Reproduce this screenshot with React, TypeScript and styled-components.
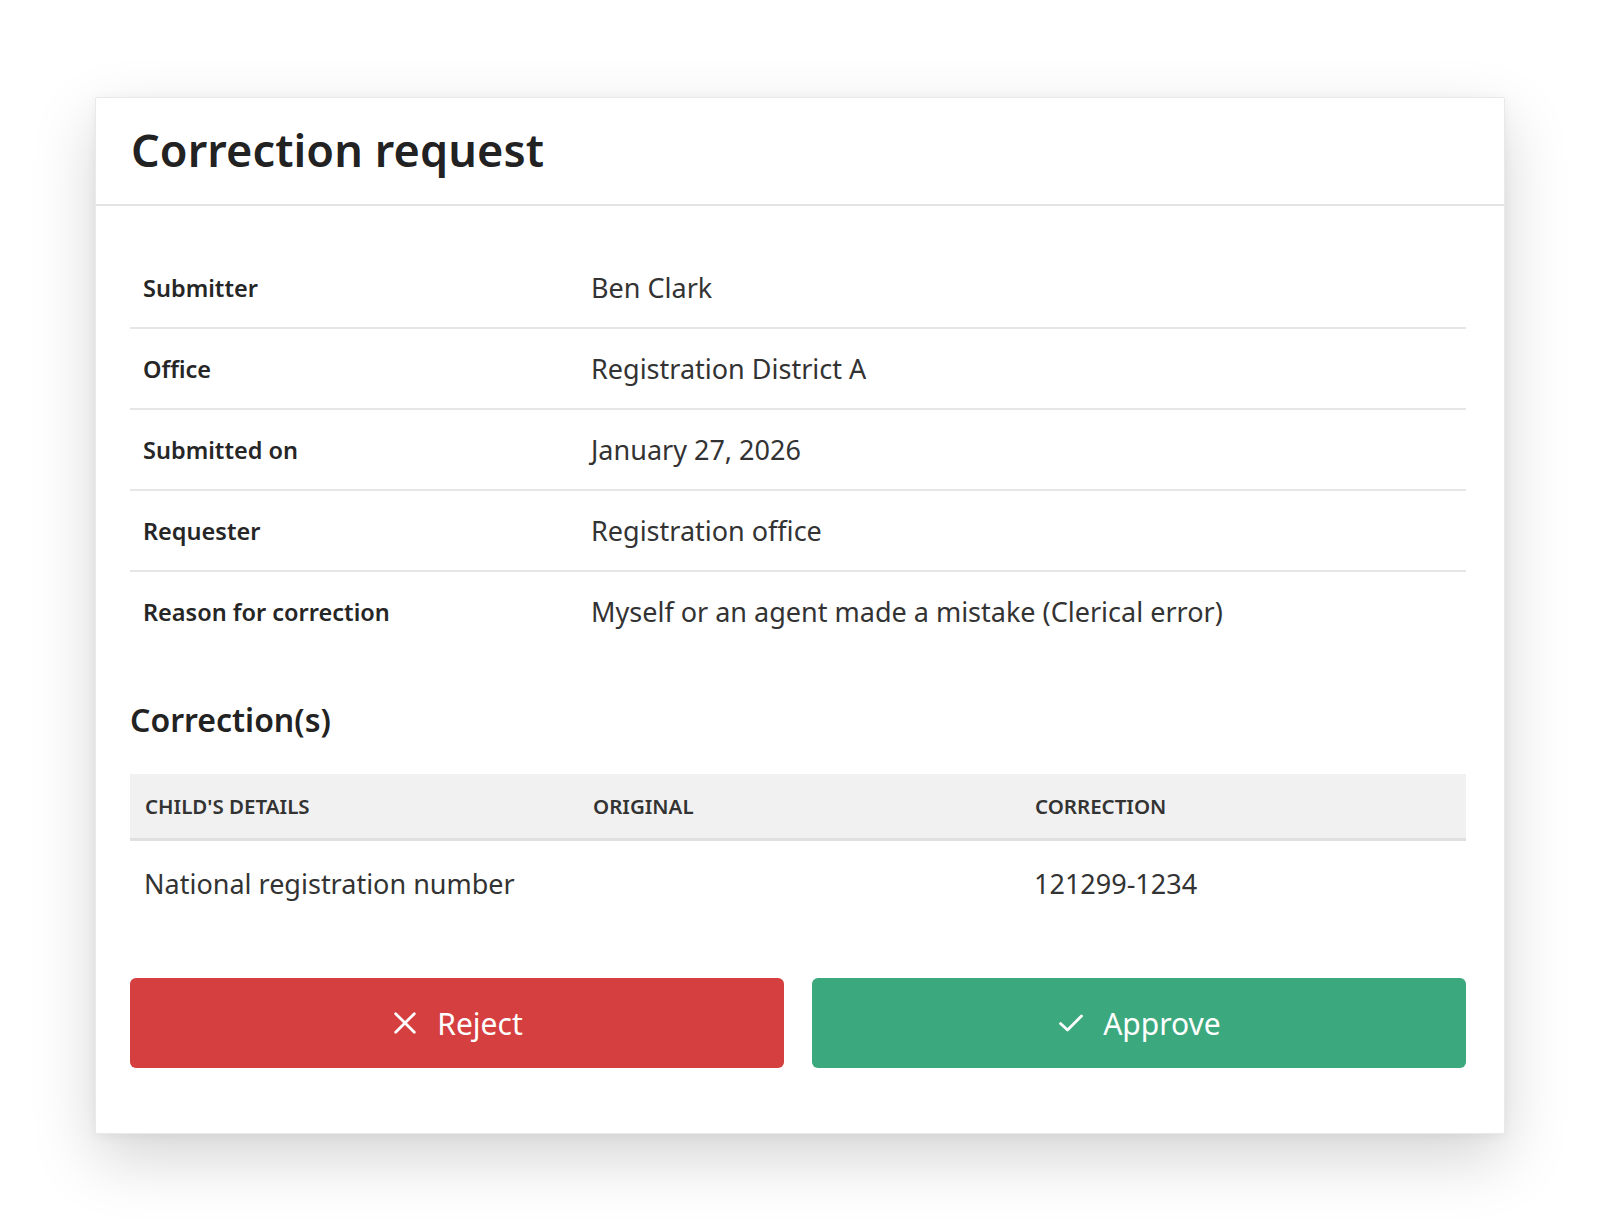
import React from "react";
import styled, { createGlobalStyle } from "styled-components";

const Global = createGlobalStyle`
  html, body {
    margin: 0;
    padding: 0;
    background: #ffffff;
    font-family: "Noto Sans", "Open Sans", sans-serif;
    color: #222222;
  }
  * { box-sizing: border-box; }
`;

const Page = styled.div`
  padding-top: 97px;
  padding-bottom: 99px;
`;

const Card = styled.section`
  width: 1410px;
  margin: 0 auto;
  background: #ffffff;
  border: 1px solid #e9e9e9;
  border-radius: 2px;
  box-shadow: 0 24px 64px rgba(0, 0, 0, 0.17), 0 2px 12px rgba(0, 0, 0, 0.05);
`;

const Header = styled.header`
  height: 108px;
  display: flex;
  align-items: center;
  padding: 0 34px 4px 35px;
  border-bottom: 2px solid #e3e3e3;
`;

const Title = styled.h1`
  margin: 0;
  font-size: 45px;
  font-weight: 600;
  color: #222222;
  letter-spacing: 0.1px;
`;

const Body = styled.div`
  padding: 42px 38px 65px 34px;
  display: flex;
  flex-direction: column;
`;

const InfoList = styled.dl`
  margin: 0;
  display: flex;
  flex-direction: column;
`;

const InfoRow = styled.div<{ $last?: boolean }>`
  display: grid;
  grid-template-columns: 461px 1fr;
  align-items: center;
  height: 81px;
  border-bottom: 2px solid ${(p) => (p.$last ? "transparent" : "#e6e6e6")};
`;

const Label = styled.dt`
  padding-left: 13px;
  font-size: 23.5px;
  font-weight: 600;
  color: #262626;
`;

const Value = styled.dd`
  margin: 0;
  font-size: 27px;
  font-weight: 400;
  color: #333333;
`;

const SectionTitle = styled.h2`
  margin: 46px 0 33px 0;
  font-size: 32px;
  font-weight: 600;
  line-height: 42px;
  color: #222222;
`;

const Table = styled.div`
  display: flex;
  flex-direction: column;
`;

const TableRow = styled.div<{ $head?: boolean }>`
  display: grid;
  grid-template-columns: 448px 442px 1fr;
  align-items: center;
  height: ${(p) => (p.$head ? "67px" : "84px")};
  background: ${(p) => (p.$head ? "#f1f1f1" : "transparent")};
  border-bottom: ${(p) => (p.$head ? "3px solid #e0e0e0" : "none")};
`;

const HeadCell = styled.div`
  padding-left: 15px;
  font-size: 20.5px;
  font-weight: 600;
  color: #333333;
  text-transform: uppercase;
`;

const Cell = styled.div`
  padding-left: 14px;
  font-size: 27px;
  color: #333333;
`;

const Actions = styled.div`
  margin-top: 53px;
  display: grid;
  grid-template-columns: 1fr 1fr;
  gap: 28px;
`;

const ActionButton = styled.button<{ $tone: "negative" | "positive" }>`
  height: 90px;
  border: none;
  border-radius: 6px;
  background: ${(p) => (p.$tone === "negative" ? "#d53f3f" : "#3ca87e")};
  color: #ffffff;
  font-family: "Noto Sans", "Open Sans", sans-serif;
  font-size: 30px;
  font-weight: 400;
  display: flex;
  align-items: center;
  justify-content: center;
  gap: 18px;
  cursor: pointer;
`;

const Icon = styled.svg`
  width: 28px;
  height: 28px;
  flex: none;
`;

const XIcon = () => (
  <Icon viewBox="0 0 24 24" fill="none" stroke="currentColor" strokeWidth="2.4" strokeLinecap="round">
    <path d="M4 4 L20 20 M20 4 L4 20" />
  </Icon>
);

const CheckIcon = () => (
  <Icon viewBox="0 0 24 24" fill="none" stroke="currentColor" strokeWidth="2.4" strokeLinecap="round" strokeLinejoin="round">
    <path d="M3 12.5 L9 18 L21 6" />
  </Icon>
);

const info = [
  { label: "Submitter", value: "Ben Clark" },
  { label: "Office", value: "Registration District A" },
  { label: "Submitted on", value: "January 27, 2026" },
  { label: "Requester", value: "Registration office" },
  { label: "Reason for correction", value: "Myself or an agent made a mistake (Clerical error)" },
];

export default function App() {
  return (
    <>
      <Global />
      <Page>
        <Card>
          <Header>
            <Title>Correction request</Title>
          </Header>
          <Body>
            <InfoList>
              {info.map((row, i) => (
                <InfoRow key={row.label} $last={i === info.length - 1}>
                  <Label>{row.label}</Label>
                  <Value>{row.value}</Value>
                </InfoRow>
              ))}
            </InfoList>
            <SectionTitle>Correction(s)</SectionTitle>
            <Table>
              <TableRow $head>
                <HeadCell>Child's details</HeadCell>
                <HeadCell>Original</HeadCell>
                <HeadCell>Correction</HeadCell>
              </TableRow>
              <TableRow>
                <Cell>National registration number</Cell>
                <Cell></Cell>
                <Cell>121299-1234</Cell>
              </TableRow>
            </Table>
            <Actions>
              <ActionButton $tone="negative">
                <XIcon />
                Reject
              </ActionButton>
              <ActionButton $tone="positive">
                <CheckIcon />
                Approve
              </ActionButton>
            </Actions>
          </Body>
        </Card>
      </Page>
    </>
  );
}
